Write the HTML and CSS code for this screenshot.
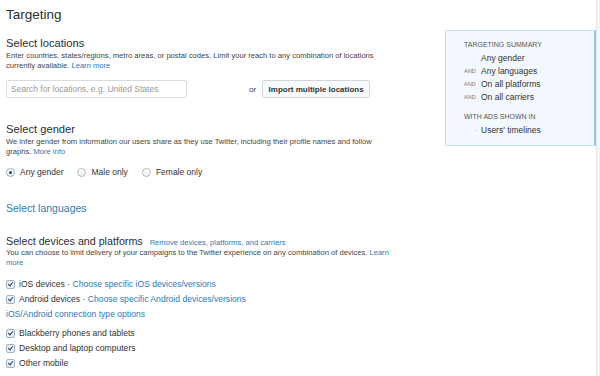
FILE: index.html
```html
<!DOCTYPE html>
<html lang="en">
<head>
    <meta charset="UTF-8">
    <meta name="viewport" content="width=device-width, initial-scale=1.0">
    <title>Targeting</title>
    <link rel="stylesheet" href="styles.css">
</head>
<body>
    <div class="page">
        <div class="main">
            <h1 class="title">Targeting</h1>

            <h2 class="section-title">Select locations</h2>
            <p class="desc">Enter countries, states/regions, metro areas, or postal codes. Limit your reach to any combination of locations currently available. <a href="#">Learn more</a></p>
            <div class="location-row">
                <input type="text" class="search" placeholder="Search for locations, e.g. United States">
                <span class="or">or</span>
                <button class="import-btn">Import multiple locations</button>
            </div>

            <h2 class="section-title gender-title">Select gender</h2>
            <p class="desc">We infer gender from information our users share as they use Twitter, including their profile names and follow graphs. <a href="#">More info</a></p>
            <div class="radio-row">
                <label class="radio"><span class="radio-dot checked"></span>Any gender</label>
                <label class="radio"><span class="radio-dot"></span>Male only</label>
                <label class="radio"><span class="radio-dot"></span>Female only</label>
            </div>

            <a href="#" class="section-link">Select languages</a>

            <div class="devices-head">
                <h2 class="section-title small">Select devices and platforms</h2>
                <a href="#" class="remove-link">Remove devices, platforms, and carriers</a>
            </div>
            <p class="desc">You can choose to limit delivery of your campaigns to the Twitter experience on any combination of devices. <a href="#">Learn more</a></p>

            <ul class="checks">
                <li><span class="box"></span>iOS devices · <a href="#">Choose specific iOS devices/versions</a></li>
                <li><span class="box"></span>Android devices · <a href="#">Choose specific Android devices/versions</a></li>
                <li class="plain"><a href="#">iOS/Android connection type options</a></li>
                <li class="spaced"><span class="box"></span>Blackberry phones and tablets</li>
                <li><span class="box"></span>Desktop and laptop computers</li>
                <li><span class="box"></span>Other mobile</li>
            </ul>
        </div>

        <div class="summary">
            <div class="summary-label">Targeting summary</div>
            <div class="summary-rows">
                <div class="summary-row"><span class="and"></span>Any gender</div>
                <div class="summary-row"><span class="and">AND</span>Any languages</div>
                <div class="summary-row"><span class="and">AND</span>On all platforms</div>
                <div class="summary-row"><span class="and">AND</span>On all carriers</div>
            </div>
            <div class="summary-label second">With ads shown in</div>
            <div class="summary-rows">
                <div class="summary-row"><span class="and dot">·</span>Users' timelines</div>
            </div>
        </div>

        <div class="strip"></div>
    </div>
</body>
</html>
```

FILE: styles.css
```css
body {
    margin: 0;
    font-family: 'Liberation Sans', Arial, sans-serif;
    color: #292f33;
    background-color: #fff;
}

a {
    color: #2b7bb9;
    text-decoration: none;
}

.page {
    display: flex;
    height: 376px;
}

.main {
    flex: 1;
    padding-left: 6px;
    padding-right: 20px;
}

.title {
    margin: 6px 0 0;
    font-size: 13.5px;
    line-height: 18px;
    font-weight: normal;
}

.section-title {
    margin: 12px 0 0;
    font-size: 11.2px;
    line-height: 15px;
    font-weight: normal;
}

.gender-title {
    margin-top: 24px;
}

.desc {
    margin: 0;
    font-size: 7.6px;
    line-height: 10px;
    color: #444;
    max-width: 388px;
}

.location-row {
    display: flex;
    align-items: center;
    margin-top: 9px;
}

.search {
    width: 181px;
    height: 18px;
    box-sizing: border-box;
    padding: 0 4px;
    border: 1px solid #d6dde2;
    border-radius: 2px;
    font-family: inherit;
    font-size: 8.5px;
}

.search::placeholder {
    color: #999;
}

.or {
    margin-left: 62px;
    font-size: 8px;
    color: #444;
}

.import-btn {
    margin-left: 6px;
    height: 18px;
    width: 108px;
    padding: 0;
    border: 1px solid #cfd6db;
    border-radius: 3px;
    background-color: #f8fafb;
    font-family: inherit;
    font-size: 8px;
    font-weight: bold;
    color: #333;
}

.radio-row {
    display: flex;
    margin-top: 9px;
    height: 12px;
    align-items: center;
}

.radio {
    display: flex;
    align-items: center;
    font-size: 8.5px;
    color: #333;
    margin-right: 14px;
}

.radio-dot {
    width: 7px;
    height: 7px;
    border: 1px solid #b8b8b8;
    border-radius: 50%;
    margin-right: 5px;
    background: linear-gradient(#fff, #eee);
    position: relative;
}

.radio-dot.checked {
    border-color: #8ab0d0;
}

.radio-dot.checked::after {
    content: '';
    position: absolute;
    left: 2px;
    top: 2px;
    width: 3px;
    height: 3px;
    border-radius: 50%;
    background-color: #2c3e50;
}

.section-link {
    display: block;
    margin-top: 23px;
    font-size: 10.5px;
    line-height: 14px;
}

.devices-head {
    display: flex;
    align-items: baseline;
    margin-top: 19px;
}

.section-title.small {
    margin: 0;
    font-size: 10.7px;
    line-height: 14px;
}

.remove-link {
    margin-left: 7px;
    font-size: 7.6px;
}

.checks {
    list-style: none;
    margin: 8.5px 0 0;
    padding: 0;
}

.checks li {
    display: flex;
    align-items: center;
    height: 15px;
    font-size: 8.6px;
    color: #333;
    white-space: pre;
}

.checks li.spaced {
    margin-top: 4px;
}

.box {
    width: 7px;
    height: 7px;
    border: 1px solid #9cb3c9;
    border-radius: 2px;
    margin-right: 4px;
    background-color: #e8f0f8;
    position: relative;
}

.box::after {
    content: '';
    position: absolute;
    left: 2px;
    top: 0;
    width: 2px;
    height: 4px;
    border: solid #2c3e50;
    border-width: 0 1.5px 1.5px 0;
    transform: rotate(40deg);
}

.summary {
    align-self: flex-start;
    width: 130px;
    margin-top: 30px;
    padding: 9px 0 8px 18px;
    background-color: #f2f8fd;
    border: 1px solid #bde0f7;
    border-right: 2px solid #8ccaf2;
}

.summary-label {
    font-size: 7px;
    line-height: 10px;
    text-transform: uppercase;
    color: #555;
}

.summary-label.second {
    margin-top: 8px;
}

.summary-rows {
    margin-top: 2px;
}

.summary-row {
    display: flex;
    font-size: 8.5px;
    line-height: 13px;
    color: #333;
}

.and {
    width: 17px;
    font-size: 5.5px;
    color: #777;
}

.and.dot {
    padding-left: 11px;
    width: 6px;
    font-size: 8px;
    color: #999;
}

.strip {
    width: 3px;
    background-color: #f5f5f5;
    border-left: 1px solid #e6e6e6;
}
```
